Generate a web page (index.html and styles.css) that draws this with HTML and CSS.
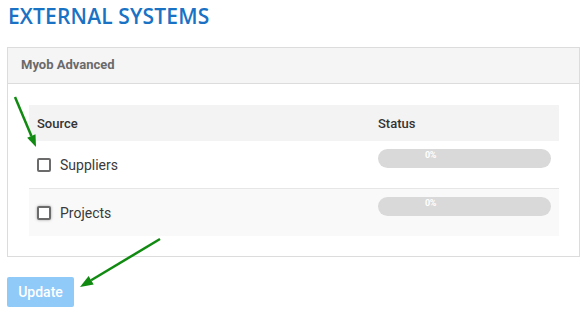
FILE: index.html
```html
<!DOCTYPE html>
<html>
<head>
  <link rel="stylesheet" href="styles.css">
</head>
<body>
  <div class="page">
    <h1 class="page-title">EXTERNAL SYSTEMS</h1>

    <div class="panel">
      <div class="panel-heading">Myob Advanced</div>
      <div class="panel-body">
        <table class="systems-table">
          <thead>
            <tr>
              <th class="col-source">Source</th>
              <th class="col-status">Status</th>
            </tr>
          </thead>
          <tbody>
            <tr>
              <td>
                <label class="check-label">
                  <span class="checkbox"></span>
                  Suppliers
                </label>
              </td>
              <td>
                <div class="progress"><span class="progress-text">0%</span></div>
              </td>
            </tr>
            <tr class="striped">
              <td>
                <label class="check-label">
                  <span class="checkbox focused"></span>
                  Projects
                </label>
              </td>
              <td>
                <div class="progress"><span class="progress-text">0%</span></div>
              </td>
            </tr>
          </tbody>
        </table>
      </div>
    </div>

    <button class="update-button" disabled>Update</button>
  </div>

  <svg class="arrows" width="588" height="314" viewBox="0 0 588 314">
    <line x1="15" y1="97" x2="31.4" y2="135.9" stroke="#108a10" stroke-width="2.5"/>
    <polygon points="27.2,137.7 35.5,134.2 36,147" fill="#108a10"/>
    <line x1="160" y1="239" x2="91.1" y2="280.3" stroke="#108a10" stroke-width="2.5"/>
    <polygon points="88.6,276 93.7,284.6 80,287" fill="#108a10"/>
  </svg>
</body>
</html>
```

FILE: styles.css
```css
body {
  margin: 0;
  font-family: Roboto, "Liberation Sans", sans-serif;
  color: #333;
  background-color: white;
}

.page {
  padding: 0 8px 0 7px;
}

.page-title {
  margin: 0;
  padding: 2px 0 0 1px;
  height: 45px;
  font-family: "Open Sans", sans-serif;
  font-weight: 600;
  font-size: 21px;
  line-height: 28px;
  letter-spacing: 0.15px;
  color: #1a72c4;
}

.panel {
  border: 1px solid #dcdcdc;
}

.panel-heading {
  background-color: #f5f5f5;
  border-bottom: 1px solid #dcdcdc;
  padding: 9px 13px 10px;
  font-size: 13px;
  font-weight: 700;
  line-height: 16px;
  color: #6a6a6a;
}

.panel-body {
  padding: 21px 20px 20px 21px;
}

.systems-table {
  width: 100%;
  border-collapse: collapse;
  font-size: 13px;
}

.systems-table th {
  background-color: #f3f3f3;
  text-align: left;
  font-weight: 500;
  font-size: 13px;
  height: 36px;
  padding: 0 8px;
  color: #333;
}

.col-source {
  width: 325px;
}

.systems-table td {
  padding: 8px 8px 0;
  vertical-align: top;
}

.systems-table tbody tr + tr {
  border-top: 1px solid #e6e6e6;
}

.striped {
  background-color: #f9f9f9;
}

.check-label {
  display: flex;
  align-items: center;
  gap: 9px;
  height: 31px;
  font-size: 14px;
  color: #3a3a3a;
}

.checkbox {
  width: 10px;
  height: 10px;
  border: 2px solid #6b6b6b;
  border-radius: 2px;
  background-color: white;
}

.checkbox.focused {
  box-shadow: 0 0 3px rgba(0, 0, 0, 0.35);
}

.progress {
  height: 19px;
  margin-bottom: 20px;
  border-radius: 10px;
  background-color: #d9d9d9;
}

.progress-text {
  display: block;
  padding: 1px 0 0 47px;
  font-size: 9px;
  font-weight: 700;
  line-height: 10px;
  letter-spacing: -0.3px;
  color: white;
}

.update-button {
  margin-top: 20px;
  width: 67px;
  height: 30px;
  border: none;
  border-radius: 2px;
  background-color: #90caf9;
  color: white;
  font-family: Roboto, sans-serif;
  font-size: 14px;
  font-weight: 500;
}

.arrows {
  position: absolute;
  top: 0;
  left: 0;
  pointer-events: none;
}
```
